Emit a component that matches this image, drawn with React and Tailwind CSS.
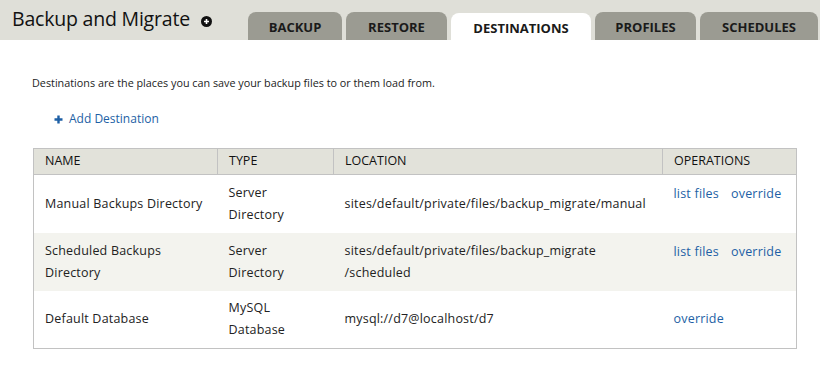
export default function App() {
  const font = { fontFamily: '"Open Sans", "DejaVu Sans", sans-serif' };
  const tabs = [
    { label: "BACKUP", w: "w-[94px]" },
    { label: "RESTORE", w: "w-[101px]" },
    { label: "DESTINATIONS", w: "w-[140px]", active: true },
    { label: "PROFILES", w: "w-[101px]" },
    { label: "SCHEDULES", w: "w-[118px]" },
  ];
  const rows = [
    {
      name: ["Manual Backups Directory"],
      type: ["Server", "Directory"],
      loc: ["sites/default/private/files/backup_migrate/manual"],
      ops: ["list files", "override"],
    },
    {
      name: ["Scheduled Backups", "Directory"],
      type: ["Server", "Directory"],
      loc: ["sites/default/private/files/backup_migrate", "/scheduled"],
      ops: ["list files", "override"],
      alt: true,
    },
    {
      name: ["Default Database"],
      type: ["MySQL", "Database"],
      loc: ["mysql://d7@localhost/d7"],
      ops: ["override"],
    },
  ];
  const Cell = ({ lines, cls = "" }) => (
    <td className={`px-[11px] align-middle text-[12.5px] tracking-[0.2px] leading-[22px] text-[#222] ${cls}`}>
      {lines.map((l, i) => (
        <div key={i}>{l}</div>
      ))}
    </td>
  );
  return (
    <div className="w-[820px] h-[369px] bg-white overflow-hidden" style={font}>
      <div className="h-[40px] bg-[#dfdfd8] flex items-end justify-between">
        <div className="self-stretch flex items-center pl-[12px] pb-[2px]">
          <span className="text-[19.5px] text-[#111] tracking-[-0.2px]">Backup and Migrate</span>
          <span className="ml-[11px] mt-[4px] w-[11px] h-[11px] rounded-full bg-[#111] flex items-center justify-center">
            <svg width="7" height="7" viewBox="0 0 7 7">
              <path d="M3.5 1v5M1 3.5h5" stroke="#fff" strokeWidth="1.6" />
            </svg>
          </span>
        </div>
        <div className="flex items-end gap-[4px] pr-[2px]">
          {tabs.map((t) => (
            <div
              key={t.label}
              className={`${t.w} ${t.active ? "h-[27px] bg-white" : "h-[28px] bg-[#9b9b92]"} rounded-t-[8px] flex items-center justify-center pt-[4px] text-[13px] font-bold text-[#1a1a1a]`}
            >
              {t.label}
            </div>
          ))}
        </div>
      </div>
      <div className="px-[32px]">
        <p className="pt-[36px] text-[10.8px] text-[#222] leading-[14px]">
          Destinations are the places you can save your backup files to or them load from.
        </p>
        <div className="mt-[20px] ml-[22px] flex items-center gap-[6px] text-[12px] text-[#1d5fa5]">
          <svg width="9" height="9" viewBox="0 0 9 9">
            <path d="M4.5 0.5v8M0.5 4.5h8" stroke="#1d5fa5" strokeWidth="2.4" />
          </svg>
          <span>Add Destination</span>
        </div>
        <table className="mt-[20px] ml-[1px] w-[763px] border-collapse border border-[#c2c2c2] table-fixed">
          <colgroup>
            <col className="w-[184px]" />
            <col className="w-[116px]" />
            <col className="w-[329px]" />
            <col className="w-[134px]" />
          </colgroup>
          <thead>
            <tr className="h-[26px] bg-[#e2e2da] text-left">
              {["NAME", "TYPE", "LOCATION", "OPERATIONS"].map((h) => (
                <th key={h} className="px-[11px] border border-[#c2c2c2] text-[12.5px] font-normal text-[#111] align-middle">
                  {h}
                </th>
              ))}
            </tr>
          </thead>
          <tbody>
            {rows.map((r, i) => (
              <tr key={i} className={`h-[58px] ${r.alt ? "bg-[#f3f3ee]" : "bg-white"}`}>
                <Cell lines={r.name} />
                <Cell lines={r.type} />
                <Cell lines={r.loc} />
                <td
                  className={`px-[11px] ${r.ops.length === 1 ? "align-middle" : "align-top pt-[8px]"} text-[12.5px] tracking-[0.2px] leading-[22px] text-[#1d5fa5]`}
                >
                  <div className="flex gap-[12px]">
                    {r.ops.map((o) => (
                      <span key={o}>{o}</span>
                    ))}
                  </div>
                </td>
              </tr>
            ))}
          </tbody>
        </table>
      </div>
    </div>
  );
}
